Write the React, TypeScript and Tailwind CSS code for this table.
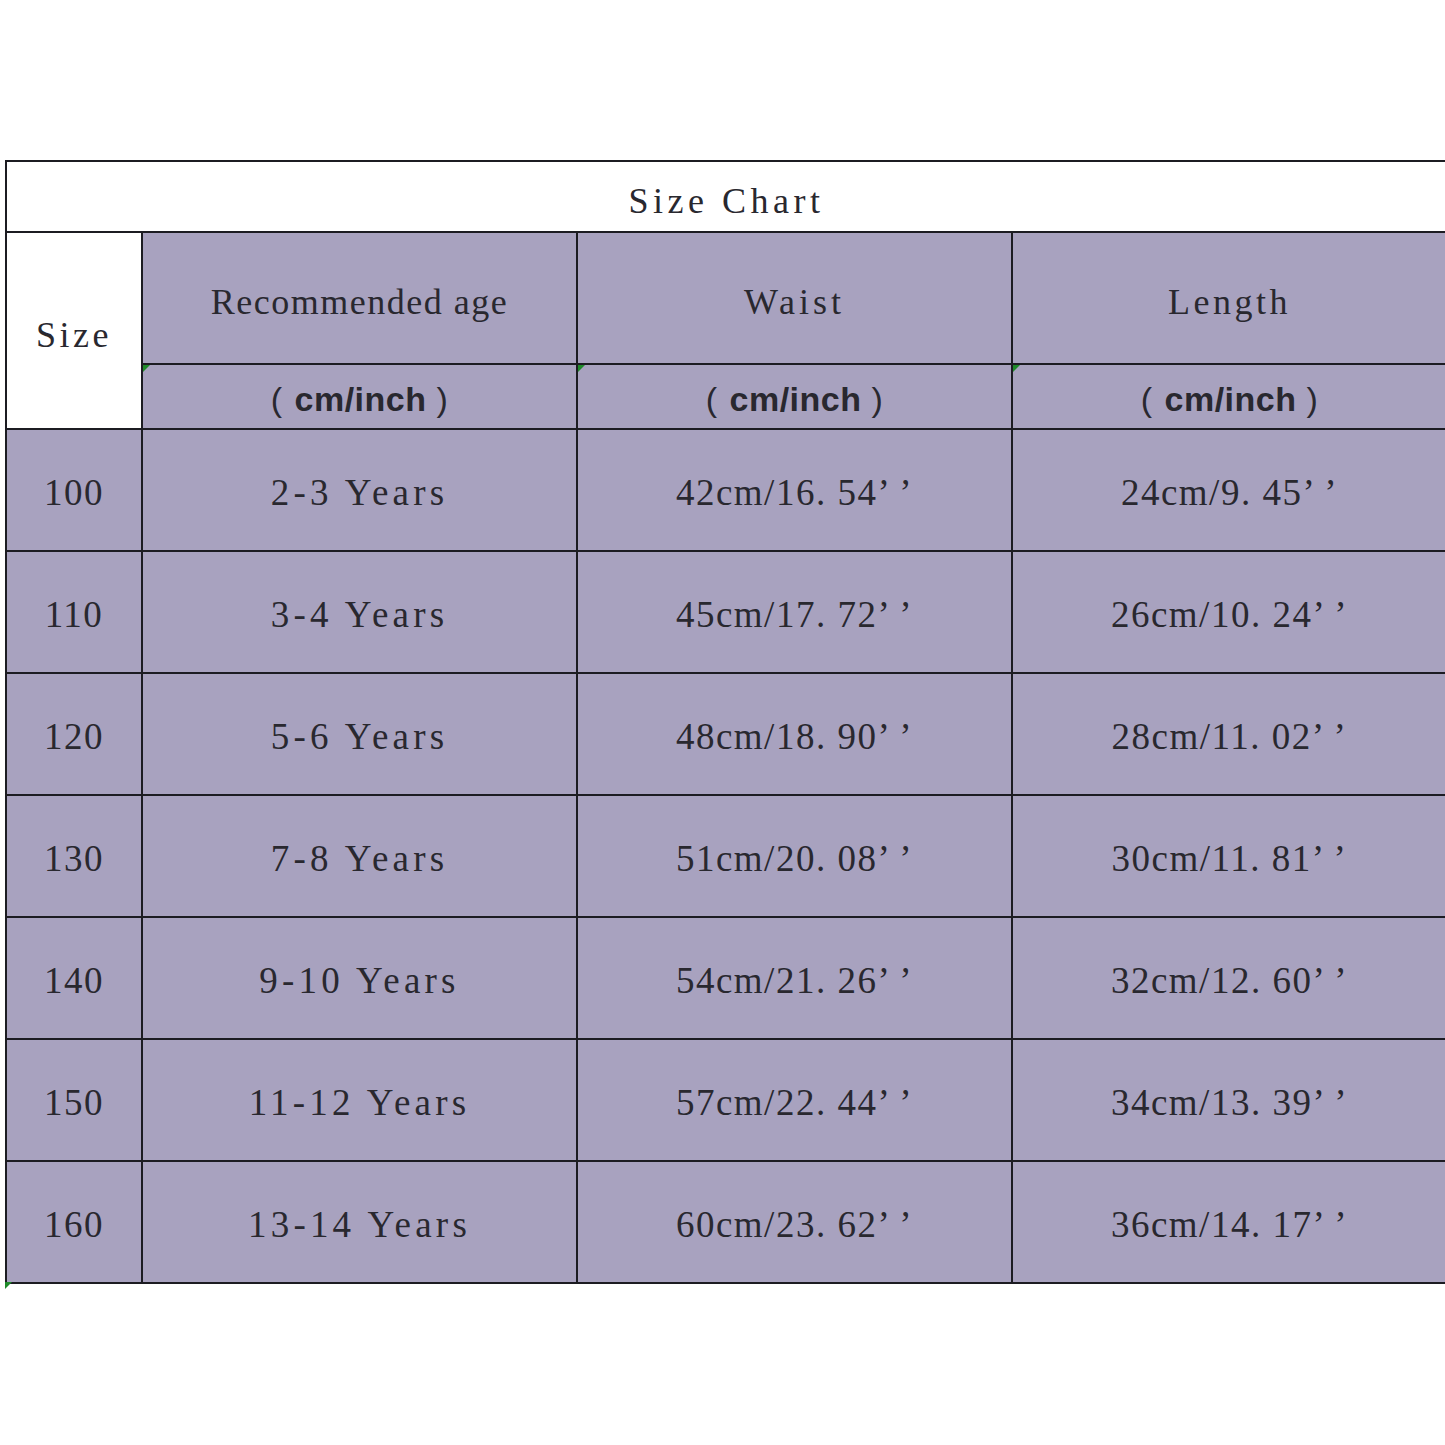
const rows = [
  { size: '100', age: '2-3 Years', waist: '42cm/16. 54’ ’', length: '24cm/9. 45’ ’' },
  { size: '110', age: '3-4 Years', waist: '45cm/17. 72’ ’', length: '26cm/10. 24’ ’' },
  { size: '120', age: '5-6 Years', waist: '48cm/18. 90’ ’', length: '28cm/11. 02’ ’' },
  { size: '130', age: '7-8 Years', waist: '51cm/20. 08’ ’', length: '30cm/11. 81’ ’' },
  { size: '140', age: '9-10 Years', waist: '54cm/21. 26’ ’', length: '32cm/12. 60’ ’' },
  { size: '150', age: '11-12 Years', waist: '57cm/22. 44’ ’', length: '34cm/13. 39’ ’' },
  { size: '160', age: '13-14 Years', waist: '60cm/23. 62’ ’', length: '36cm/14. 17’ ’' },
];

const serif = "font-['Liberation_Serif','Noto_Sans_CJK_SC',serif] text-[#29282f]";

// little green comment marker in the corner of a cell
const Marker = () => (
  <svg className="absolute left-0 top-0" width="7" height="7" viewBox="0 0 7 7">
    <polygon points="0,0 7,0 0,7" fill="#1f8a2a" />
  </svg>
);

const UnitCell = () => (
  <div className="relative flex items-center justify-center bg-[#a8a2bf] pt-[5px]">
    <Marker />
    <span className="font-['Liberation_Sans','Noto_Sans_CJK_SC',sans-serif] text-[34px] font-bold text-[#29282f] tracking-[0.5px]">
      <span className="font-normal mr-[12px]">(</span>
      cm/inch
      <span className="font-normal ml-[10px]">)</span>
    </span>
  </div>
);

export default function App() {
  return (
    <div className="w-[1445px] h-[1445px] overflow-hidden bg-white">
      <div className="pt-[160px] pl-[5px] w-[1460px]">
        <div className="grid grid-cols-[134px_433px_433px_433px] grid-rows-[69px_130px_63px_repeat(7,120px)] gap-[2px] bg-[#1c1c22] p-[2px] w-[1445px]">
          {/* title */}
          <div className={`col-span-4 flex items-center justify-center bg-white pt-[8px] ${serif} text-[36px] tracking-[4.5px]`}>
            Size Chart
          </div>

          {/* header */}
          <div className={`row-span-2 flex items-center justify-center bg-white pt-[8px] ${serif} text-[36px] tracking-[3.5px]`}>
            Size
          </div>
          <div className={`flex items-center justify-center bg-[#a8a2bf] pt-[8px] ${serif} text-[36px] tracking-[1.5px]`}>
            Recommended age
          </div>
          <div className={`flex items-center justify-center bg-[#a8a2bf] pt-[8px] ${serif} text-[36px] tracking-[4px]`}>
            Waist
          </div>
          <div className={`flex items-center justify-center bg-[#a8a2bf] pt-[8px] ${serif} text-[36px] tracking-[3.5px]`}>
            Length
          </div>
          <UnitCell />
          <UnitCell />
          <UnitCell />

          {/* data */}
          {rows.map((r) => (
            <div key={r.size} className="contents">
              <div className={`flex items-center justify-center bg-[#a8a2bf] pt-[6px] ${serif} text-[37px] tracking-[1.5px]`}>
                {r.size}
              </div>
              <div className={`flex items-center justify-center bg-[#a8a2bf] pt-[6px] ${serif} text-[37px] tracking-[4.2px]`}>
                {r.age}
              </div>
              <div className={`flex items-center justify-center bg-[#a8a2bf] pt-[6px] ${serif} text-[37px] tracking-[1.5px]`}>
                {r.waist}
              </div>
              <div className={`flex items-center justify-center bg-[#a8a2bf] pt-[6px] ${serif} text-[37px] tracking-[1.5px]`}>
                {r.length}
              </div>
            </div>
          ))}
        </div>
        <svg className="block -mt-[2px]" width="7" height="7" viewBox="0 0 7 7">
          <polygon points="0,0 7,0 0,7" fill="#1f8a2a" />
        </svg>
      </div>
    </div>
  );
}
